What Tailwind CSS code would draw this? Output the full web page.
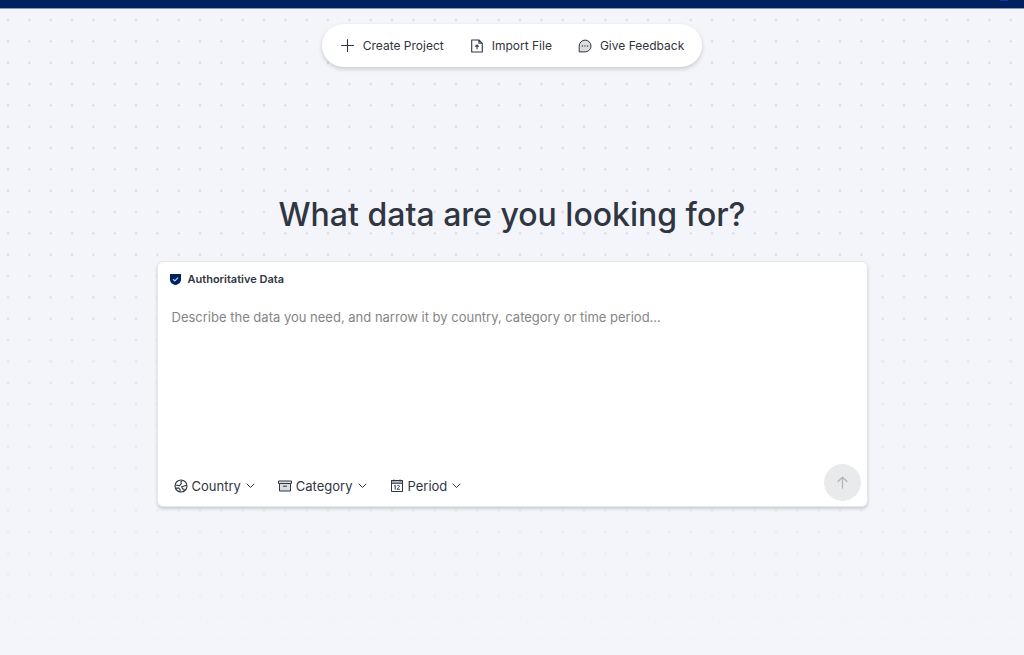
<!DOCTYPE html>
<html lang="en">
<head>
    <meta charset="UTF-8">
    <meta name="viewport" content="width=device-width, initial-scale=1.0">
    <title>Data Search</title>
    <script src="https://cdn.jsdelivr.net/npm/@tailwindcss/browser@4"></script>
</head>
<body class="relative isolate min-h-screen overflow-x-hidden bg-[#f3f5fa] font-['Inter',sans-serif] text-[#303641]">
    <!-- dotted canvas, fades out towards the bottom -->
    <svg class="absolute inset-0 -z-10 h-full w-full" aria-hidden="true">
        <defs>
            <pattern id="dots" width="64" height="64" y="12" patternUnits="userSpaceOnUse">
                <g fill="#dadde2">
                    <circle cx="8" cy="8" r="1.2"/><circle cx="29.4" cy="8" r="1.2"/><circle cx="50.7" cy="8" r="1.2"/>
                    <circle cx="8" cy="29.4" r="1.2"/><circle cx="29.4" cy="29.4" r="1.2"/><circle cx="50.7" cy="29.4" r="1.2"/>
                    <circle cx="8" cy="50.7" r="1.2"/><circle cx="29.4" cy="50.7" r="1.2"/><circle cx="50.7" cy="50.7" r="1.2"/>
                </g>
            </pattern>
            <linearGradient id="fade" x2="0" y2="1">
                <stop offset="0.3" stop-color="#f3f5fa" stop-opacity="0"/>
                <stop offset="1" stop-color="#f3f5fa" stop-opacity="0.85"/>
            </linearGradient>
        </defs>
        <rect width="100%" height="100%" fill="url(#dots)"/>
        <rect width="100%" height="100%" fill="url(#fade)"/>
    </svg>

    <header class="flex h-[9px] justify-end border-b border-[#8798bc] bg-[#00205f] pr-4">
        <span class="h-px w-2 bg-[#12359b]"></span>
    </header>

    <main class="flex flex-col items-center px-4 pt-[15px]">
        <nav class="flex h-[43px] items-center gap-[26px] rounded-full bg-white px-[18px] text-xs shadow-[0_2px_4px_rgba(30,35,50,0.2)]">
            <button type="button" class="flex items-center gap-2">
                <svg class="size-[15px]" viewBox="0 0 15 15" fill="none" stroke="currentColor" stroke-width="1.1" stroke-linecap="round">
                    <path d="M7.5 1.5v12M1.5 7.5h12"/>
                </svg>
                Create Project
            </button>
            <button type="button" class="flex items-center gap-2">
                <svg class="size-[14px]" viewBox="0 0 14 14" fill="none" stroke="currentColor" stroke-width="1.1" stroke-linejoin="round">
                    <path d="M1.7 1h7.2l3.4 3.3V13H1.7zM8.9 1v3.3h3.4"/>
                    <path d="M7 10.2V6.3M5.3 7.7L7 6l1.7 1.7"/>
                </svg>
                Import File
            </button>
            <button type="button" class="flex items-center gap-2">
                <svg class="size-[14px]" viewBox="0 0 14 14" fill="none" stroke="currentColor" stroke-linejoin="round">
                    <path d="M1.2 12.9V7A5.9 5.9 0 1 1 7.1 12.9z" fill="#dcdde0"/>
                    <g fill="currentColor" stroke="none">
                        <circle cx="4.4" cy="7" r="0.7"/><circle cx="7" cy="7" r="0.7"/><circle cx="9.6" cy="7" r="0.7"/>
                    </g>
                </svg>
                Give Feedback
            </button>
        </nav>

        <h1 class="mt-[128px] text-center text-[32px] leading-10 font-medium">What data are you looking for?</h1>

        <form class="mt-[26px] flex min-h-[246px] w-full max-w-[711px] flex-col rounded-md border border-[#e3e5ed] bg-white shadow-[0_2px_3px_rgba(30,35,50,0.18)]">
            <label for="query" class="flex items-center gap-[7px] px-3 pt-[9px] text-[11px] leading-4 font-semibold text-[#303641]">
                <svg class="size-[11px]" viewBox="0 0 11 11">
                    <path d="M0 0h11v5.5C11 8.7 8.5 10.4 5.5 11 2.5 10.4 0 8.7 0 5.5z" fill="#00205f"/>
                    <path d="M3 5.2l1.8 1.7L8.1 3.6" fill="none" stroke="#a9d4ff" stroke-width="1.2"/>
                </svg>
                Authoritative Data
            </label>
            <textarea id="query" class="mt-5 w-full grow resize-none px-[14px] text-[13px] leading-5 outline-none placeholder:text-[#858585]" placeholder="Describe the data you need, and narrow it by country, category or time period..."></textarea>
            <div class="flex items-center justify-between pr-[6px] pb-[5px] pl-4">
                <div class="flex items-center gap-[22px] pt-[6px] text-[13px] leading-5">
                    <button type="button" class="flex items-center gap-1">
                        <svg class="size-[14px]" viewBox="0 0 14 14" fill="none" stroke="currentColor" stroke-width="1.1" stroke-linejoin="round">
                            <circle cx="7" cy="7" r="6"/>
                            <path d="M1.2 6l4.3.7 1.9-2.1L6.800 2.900l1.900-1.600M12.900 6.200L7.600 7.700l1 2 1.500.6v1.800M1.700 9.300l2.800-.4 1.700 1.700-.4 2.200"/>
                        </svg>
                        Country
                        <svg class="size-[11px]" viewBox="0 0 11 11" fill="none" stroke="currentColor" stroke-linecap="round" stroke-linejoin="round"><path d="M2 4l3.5 3.5L9 4"/></svg>
                    </button>
                    <button type="button" class="flex items-center gap-1">
                        <svg class="size-[14px]" viewBox="0 0 14 14" fill="none" stroke="currentColor">
                            <path d="M.5 2h13v2.500H.5z" fill="#dcdde0"/>
                            <path d="M1.500 4.500h11V12h-11z" fill="#dcdde0"/>
                            <path d="M5 7.200h4"/>
                        </svg>
                        Category
                        <svg class="size-[11px]" viewBox="0 0 11 11" fill="none" stroke="currentColor" stroke-linecap="round" stroke-linejoin="round"><path d="M2 4l3.5 3.5L9 4"/></svg>
                    </button>
                    <button type="button" class="flex items-center gap-1">
                        <svg class="size-[14px]" viewBox="0 0 14 14" fill="none" stroke="currentColor">
                            <path d="M1.5 1.5h11v11h-11z"/>
                            <path d="M1.5 1.5h11v2.8h-11z" fill="#b9bcc2"/>
                            <path d="M4 .5v2M10 .5v2"/>
                            <path d="M4.2 7l1-.7v4.4M7.2 7.2c.2-1.1 2.4-1 2.3.2 0 1-2.2 1.6-2.3 2.9h2.6"/>
                        </svg>
                        Period
                        <svg class="size-[11px]" viewBox="0 0 11 11" fill="none" stroke="currentColor" stroke-linecap="round" stroke-linejoin="round"><path d="M2 4l3.5 3.5L9 4"/></svg>
                    </button>
                </div>
                <button type="submit" disabled aria-label="Search" class="flex size-[37px] items-center justify-center rounded-full bg-[#e9eaec] text-[#b3b5b9]">
                    <svg class="size-[13px]" viewBox="0 0 13 13" fill="none" stroke="currentColor" stroke-width="1.3" stroke-linecap="round" stroke-linejoin="round">
                        <path d="M6.5 12V1.2M2 5.5l4.5-4.3L11 5.5"/>
                    </svg>
                </button>
            </div>
        </form>
    </main>
</body>
</html>
